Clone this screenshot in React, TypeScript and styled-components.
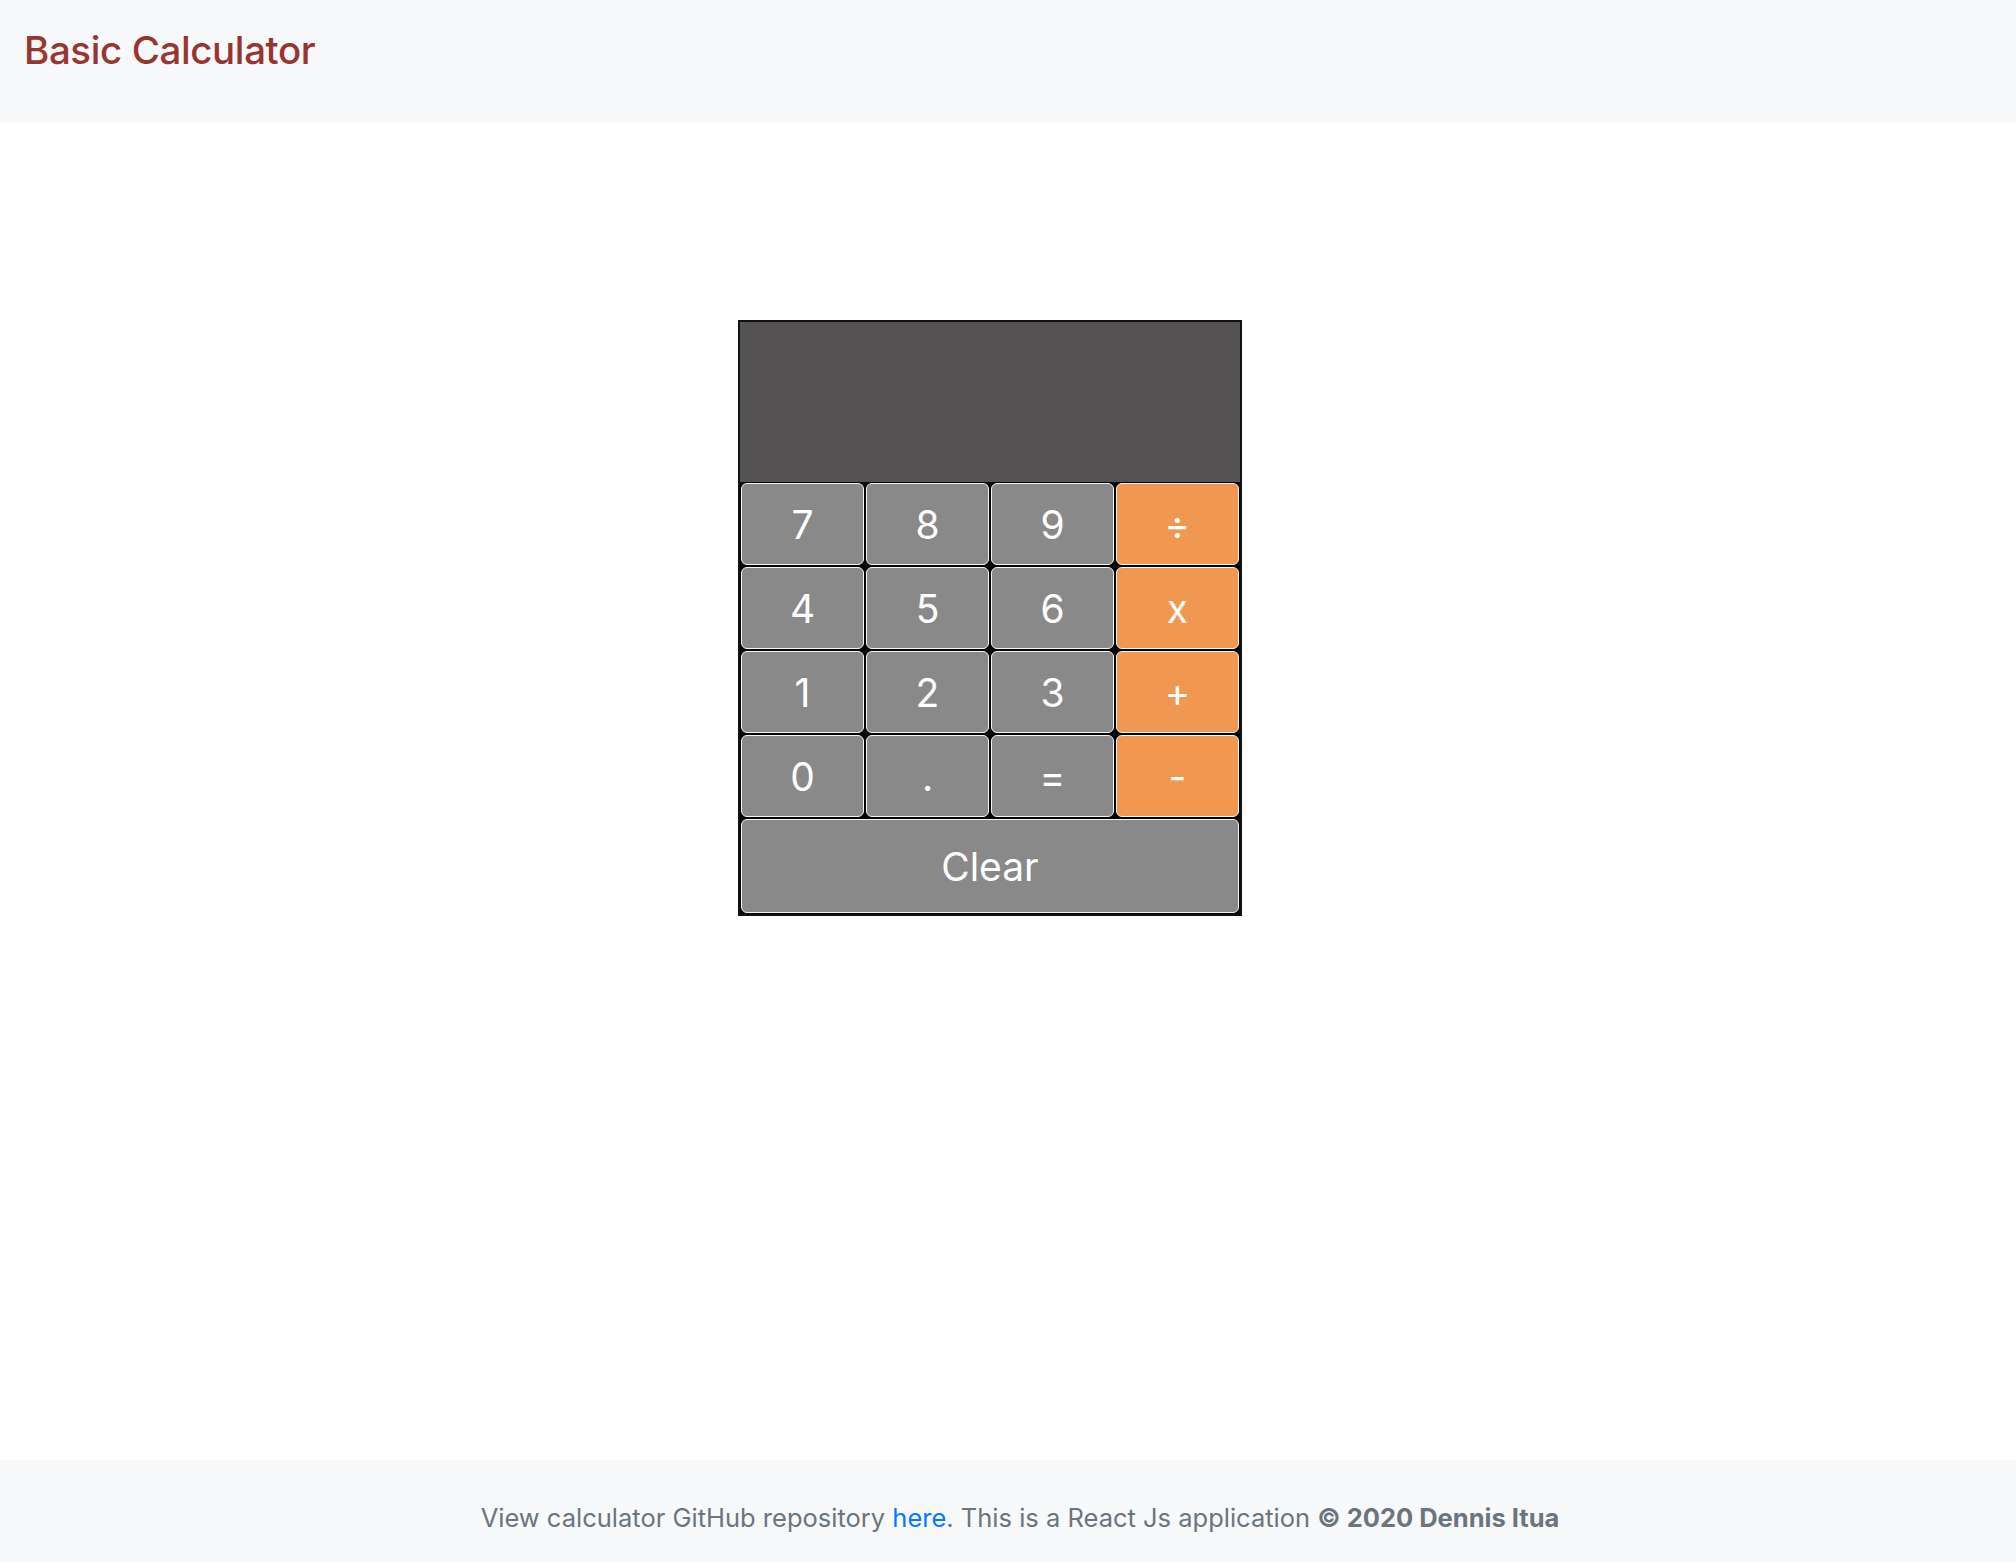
import React from "react";
import styled, { createGlobalStyle } from "styled-components";

const GlobalStyle = createGlobalStyle`
  html, body {
    margin: 0;
    padding: 0;
    background: #ffffff;
    font-family: Inter, "Noto Sans", "Liberation Sans", sans-serif;
  }
  * { box-sizing: border-box; }
`;

const Page = styled.div`
  min-height: 100vh;
  display: flex;
  flex-direction: column;
`;

const Header = styled.header`
  height: 122px;
  background: #f8f9fa;
  padding: 27px 0 0 24px;
`;

const Brand = styled.h1`
  margin: 0;
  font-size: 38.5px;
  line-height: 46px;
  font-weight: 500;
  color: #993530;
  letter-spacing: -0.4px;
`;

const Main = styled.main`
  flex: 1;
  padding: 198px 36px 0 0;
  display: flex;
  justify-content: center;
  align-items: flex-start;
`;

const Calculator = styled.div`
  width: 504px;
  border: 2px solid #111111;
  background: #050505;
  display: flex;
  flex-direction: column;
`;

const Display = styled.div`
  height: 160px;
  background: #545253;
  color: #ffffff;
  font-size: 48px;
  display: flex;
  align-items: flex-end;
  justify-content: flex-end;
  padding: 12px 20px;
`;

const Keypad = styled.div`
  display: grid;
  grid-template-columns: repeat(4, 1fr);
  grid-auto-rows: 84px;
`;

const Key = styled.button<{ $op?: boolean; $wide?: boolean }>`
  margin: 1px;
  border: 1.5px solid #f4f4f4;
  border-radius: 6px;
  background: ${(p) => (p.$op ? "#f09751" : "#898989")};
  color: #ffffff;
  font-family: Inter, "Noto Sans", "Liberation Sans", sans-serif;
  font-size: 39px;
  font-weight: 400;
  padding: 0;
  cursor: pointer;
  display: flex;
  align-items: center;
  justify-content: center;
  ${(p) => (p.$wide ? "height: 94px;" : "")}
`;

const Footer = styled.footer`
  height: 102px;
  background: #f8f9fa;
  padding: 40px 0 0 24px;
  text-align: center;
  font-size: 25.5px;
  line-height: 36px;
  color: #6c757d;
`;

const Link = styled.a`
  color: #007bff;
  text-decoration: none;
`;

const Strong = styled.strong`
  font-weight: 700;
`;

const keys: { label: string; op?: boolean }[] = [
  { label: "7" }, { label: "8" }, { label: "9" }, { label: "÷", op: true },
  { label: "4" }, { label: "5" }, { label: "6" }, { label: "x", op: true },
  { label: "1" }, { label: "2" }, { label: "3" }, { label: "+", op: true },
  { label: "0" }, { label: "." }, { label: "=" }, { label: "-", op: true },
];

export default function App() {
  return (
    <Page>
      <GlobalStyle />
      <Header>
        <Brand>Basic Calculator</Brand>
      </Header>
      <Main>
        <Calculator>
          <Display />
          <Keypad>
            {keys.map((k) => (
              <Key key={k.label} $op={k.op}>
                {k.label}
              </Key>
            ))}
          </Keypad>
          <Key $wide>Clear</Key>
        </Calculator>
      </Main>
      <Footer>
        View calculator GitHub repository <Link href="#">here</Link>. This is a React Js application{" "}
        <Strong>© 2020 Dennis Itua</Strong>
      </Footer>
    </Page>
  );
}
